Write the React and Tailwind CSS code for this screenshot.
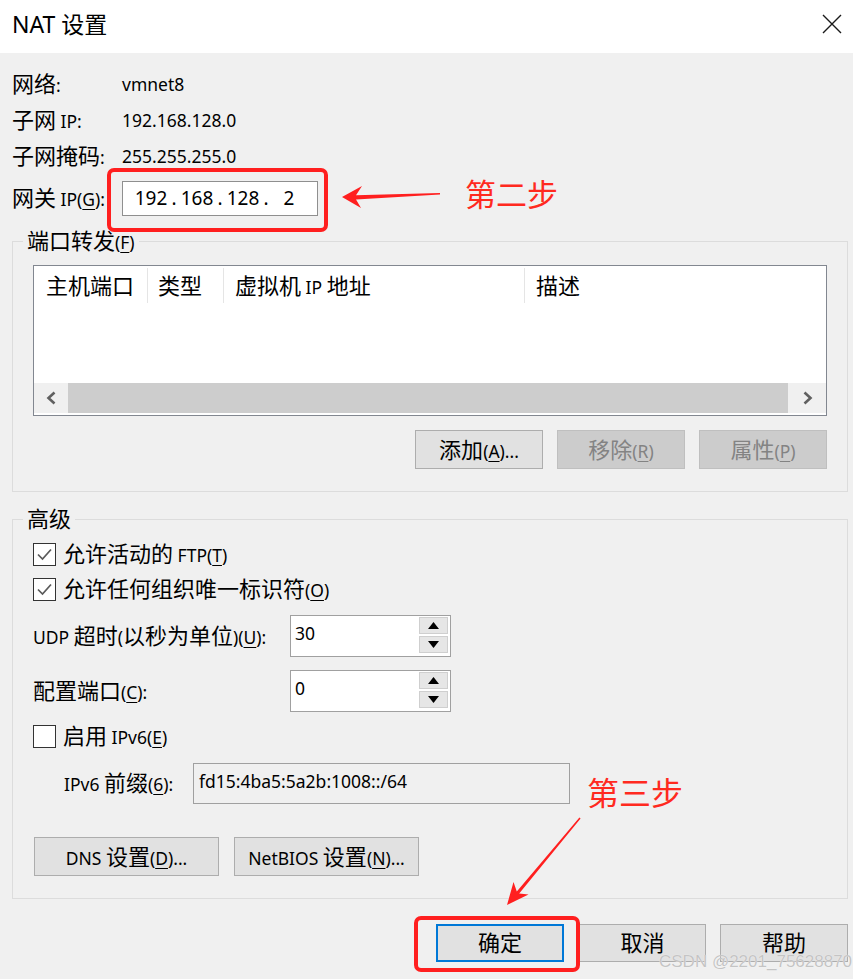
import React from "react";

function T({ s }) {
  const parts = [];
  const re = /(_.|[\u2e80-\u9fff\uff00-\uffef]+)/g;
  let last = 0;
  let m;
  let k = 0;
  while ((m = re.exec(s))) {
    if (m.index > last) parts.push(<span key={k++}>{s.slice(last, m.index)}</span>);
    const tok = m[0];
    if (tok[0] === "_" && tok.length === 2) {
      parts.push(
        <span key={k++} className="underline underline-offset-[3px] decoration-[1px]">
          {tok[1]}
        </span>
      );
    } else {
      parts.push(
        <span key={k++} className="text-[22px]">
          {tok}
        </span>
      );
    }
    last = m.index + tok.length;
  }
  if (last < s.length) parts.push(<span key={k++}>{s.slice(last)}</span>);
  return <span className="whitespace-pre">{parts}</span>;
}

function InfoRow({ label, value }) {
  return (
    <div className="h-[36px] flex items-center">
      <div className="w-[110px]">
        <T s={label} />
      </div>
      <div>{value}</div>
    </div>
  );
}

function Btn({ s, disabled }) {
  return (
    <div
      className={
        disabled
          ? "w-[128px] h-[39px] bg-[#cccccc] border border-[#bfbfbf] text-[#838383] flex items-center justify-center"
          : "w-[128px] h-[39px] bg-[#e1e1e1] border border-[#adadad] flex items-center justify-center"
      }
    >
      <T s={s} />
    </div>
  );
}

function WideBtn({ s }) {
  return (
    <div className="w-[185px] h-[39px] bg-[#e1e1e1] border border-[#adadad] flex items-center justify-center">
      <T s={s} />
    </div>
  );
}

function Check({ checked }) {
  return (
    <div className="w-[23px] h-[23px] bg-white border border-[#333333] flex items-center justify-center shrink-0">
      {checked && (
        <svg width="21" height="21" viewBox="0 0 21 21">
          <polyline points="4,10.5 8.5,15 17,5.5" fill="none" stroke="#5a5a5a" strokeWidth="1.7" />
        </svg>
      )}
    </div>
  );
}

function CheckRow({ checked, s, mt }) {
  return (
    <div className={"h-[30px] flex items-center gap-[7px] " + mt}>
      <Check checked={checked} />
      <T s={s} />
    </div>
  );
}

function SpinBtn({ up }) {
  return (
    <div className="flex-1 bg-[#e6e6e6] border border-[#cfcfcf] flex items-center justify-center">
      <svg width="11" height="7" viewBox="0 0 11 7">
        {up ? <polygon points="0,7 5.5,0 11,7" fill="#000" /> : <polygon points="0,0 5.5,7 11,0" fill="#000" />}
      </svg>
    </div>
  );
}

function Spinner({ v }) {
  return (
    <div className="w-[161px] h-[42px] bg-white border border-[#a0a0a0] flex">
      <div className="flex-1 pl-[4px] pt-[5px]">{v}</div>
      <div className="w-[31px] flex flex-col gap-[2px] pt-[1px] pb-[3px] pr-[2px]">
        <SpinBtn up />
        <SpinBtn />
      </div>
    </div>
  );
}

function Chevron({ right }) {
  return (
    <svg width="11" height="14" viewBox="0 0 11 14">
      {right ? (
        <polyline points="2.5,1.5 8.5,7 2.5,12.5" fill="none" stroke="#606060" strokeWidth="2.6" />
      ) : (
        <polyline points="8.5,1.5 2.5,7 8.5,12.5" fill="none" stroke="#606060" strokeWidth="2.6" />
      )}
    </svg>
  );
}

export default function App() {
  return (
    <div className="relative w-[853px] h-[979px] overflow-hidden bg-[#f0f0f0] text-black text-[17.5px] leading-[24px] font-['Noto_Sans','Noto_Sans_CJK_SC',sans-serif]">
      {/* title bar */}
      <div className="h-[53px] bg-white flex items-center justify-between pl-[12px] pr-[11px] pb-[5px]">
        <span className="text-[23px] leading-[30px]">NAT 设置</span>
        <svg width="20" height="20" viewBox="0 0 20 20">
          <path d="M1 1L19 19M19 1L1 19" stroke="#1a1a1a" strokeWidth="1.4" />
        </svg>
      </div>

      <div className="pl-[12px] pr-[5px]">
        <div className="pt-[13px]">
          <InfoRow label="网络:" value="vmnet8" />
          <InfoRow label="子网 IP:" value="192.168.128.0" />
          <InfoRow label="子网掩码:" value="255.255.255.0" />
          <div className="h-[48px] flex items-center">
            <div className="w-[110px]">
              <T s="网关 IP(_G):" />
            </div>
            <div className="relative">
              <div className="w-[196px] h-[35px] bg-white border border-[#8f8f8f] flex items-center pl-[8px] text-[19px]">
                <span className="w-[40px] text-center">192</span>
                <span className="w-[6px] text-center">.</span>
                <span className="w-[40px] text-center">168</span>
                <span className="w-[6px] text-center">.</span>
                <span className="w-[40px] text-center">128</span>
                <span className="w-[6px] text-center">.</span>
                <span className="w-[40px] text-center">2</span>
              </div>
              <div className="absolute left-[-15px] top-[-13px] w-[221px] h-[64px] border-[4px] border-[#ff1f1f] rounded-[7px]" />
            </div>
          </div>
        </div>

        {/* 端口转发 */}
        <fieldset className="mt-[8px] border border-[#dcdcdc] pb-[22px]">
          <legend className="ml-[10px] px-[4px] h-[22px] flex items-center">
            <T s="端口转发(_F)" />
          </legend>
          <div className="px-[20px]">
            <div className="mt-[13px] h-[151px] border border-[#828790] bg-white flex flex-col">
              <div className="h-[39px] flex shrink-0">
                <div className="w-[114px] py-[2px] flex">
                  <div className="flex-1 flex items-center pl-[12px] border-r border-[#e5e5e5]">
                    <T s="主机端口" />
                  </div>
                </div>
                <div className="w-[76px] py-[2px] flex">
                  <div className="flex-1 flex items-center pl-[10px] border-r border-[#e5e5e5]">
                    <T s="类型" />
                  </div>
                </div>
                <div className="w-[301px] py-[2px] flex">
                  <div className="flex-1 flex items-center pl-[11px] border-r border-[#e5e5e5]">
                    <T s="虚拟机 IP 地址" />
                  </div>
                </div>
                <div className="flex-1 py-[2px] flex">
                  <div className="flex-1 flex items-center pl-[11px]">
                    <T s="描述" />
                  </div>
                </div>
              </div>
              <div className="flex-1" />
              <div className="h-[30px] mb-[2px] flex shrink-0 bg-[#f0f0f0]">
                <div className="w-[34px] flex items-center justify-center">
                  <Chevron />
                </div>
                <div className="flex-1 bg-[#cdcdcd]" />
                <div className="w-[38px] flex items-center justify-center">
                  <Chevron right />
                </div>
              </div>
            </div>
            <div className="mt-[14px] flex justify-end gap-[14px]">
              <Btn s="添加(_A)..." />
              <Btn s="移除(_R)" disabled />
              <Btn s="属性(_P)" disabled />
            </div>
          </div>
        </fieldset>

        {/* 高级 */}
        <fieldset className="mt-[16px] border border-[#dcdcdc] pb-[22px]">
          <legend className="ml-[10px] px-[4px] h-[22px] flex items-center">
            <T s="高级" />
          </legend>
          <div className="px-[20px]">
            <CheckRow checked s="允许活动的 FTP(_T)" mt="mt-[9px]" />
            <CheckRow checked s="允许任何组织唯一标识符(_O)" mt="mt-[5px]" />
            <div className="mt-[11px] h-[42px] flex items-center">
              <div className="w-[257px]">
                <T s="UDP 超时(以秒为单位)(_U):" />
              </div>
              <Spinner v="30" />
            </div>
            <div className="mt-[13px] h-[42px] flex items-center">
              <div className="w-[257px]">
                <T s="配置端口(_C):" />
              </div>
              <Spinner v="0" />
            </div>
            <CheckRow s="启用 IPv6(_E)" mt="mt-[9px]" />
            <div className="mt-[11px] h-[42px] flex items-center pl-[31px]">
              <div className="w-[129px]">
                <T s="IPv6 前缀(_6):" />
              </div>
              <div className="w-[377px] h-[41px] bg-[#f0f0f0] border border-[#a0a0a0] pl-[5px] pt-[5px]">
                fd15:4ba5:5a2b:1008::/64
              </div>
            </div>
            <div className="mt-[33px] ml-[1px] flex gap-[15px]">
              <WideBtn s="DNS 设置(_D)..." />
              <WideBtn s="NetBIOS 设置(_N)..." />
            </div>
          </div>
        </fieldset>

        {/* bottom buttons */}
        <div className="mt-[25px] flex justify-end gap-[14px]">
          <div className="relative mr-[1px]">
            <div className="w-[128px] h-[38px] bg-[#e1e1e1] border-[2px] border-[#0078d7] flex items-center justify-center">
              <T s="确定" />
            </div>
            <div className="absolute left-[-22px] top-[-8px] w-[166px] h-[56px] border-[4px] border-[#ff1f1f] rounded-[7px]" />
          </div>
          <div className="w-[127px] h-[38px] bg-[#e1e1e1] border border-[#adadad] flex items-center justify-center">
            <T s="取消" />
          </div>
          <div className="w-[128px] h-[38px] bg-[#e1e1e1] border border-[#adadad] flex items-center justify-center">
            <T s="帮助" />
          </div>
        </div>
      </div>

      {/* annotations */}
      <svg className="absolute left-0 top-0 pointer-events-none" width="853" height="979" viewBox="0 0 853 979">
        <polygon
          points="342,197 362,186 356,195.3 440,193 440,194.6 356,199.6 361,208"
          fill="#ff1f1f"
        />
        <polygon
          points="507,905 513.5,882 516.8,891.6 579.4,817.6 580.6,818.4 519.2,893.6 528.5,894.5"
          fill="#ff1f1f"
        />
      </svg>
      <div className="absolute left-[465px] top-[177px] text-[31px] leading-[31px] text-[#ff2a1f] font-['Noto_Sans_CJK_SC',sans-serif]">
        第二步
      </div>
      <div className="absolute left-[587px] top-[775px] text-[32px] leading-[32px] text-[#ff2a1f] font-['Noto_Sans_CJK_SC',sans-serif]">
        第三步
      </div>
      <div className="absolute left-[659px] top-[952px] text-[17px] leading-[20px] text-[#c4c4c4] font-['Liberation_Sans',sans-serif] [text-shadow:0_0_1px_#ffffff]">
        CSDN @2201_75628870
      </div>
    </div>
  );
}
